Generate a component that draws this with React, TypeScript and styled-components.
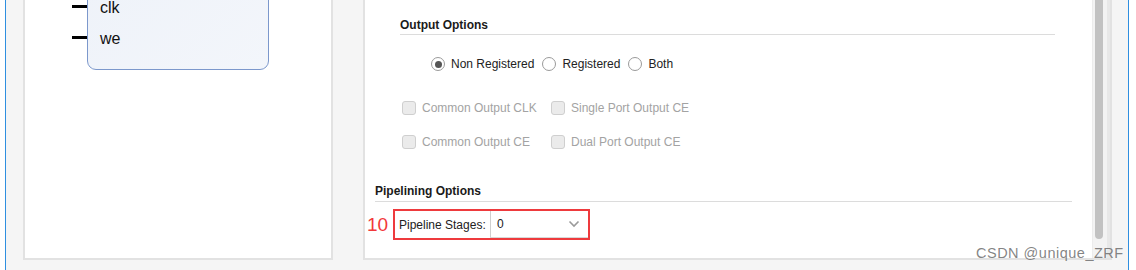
import React from "react";
import styled, { createGlobalStyle } from "styled-components";

const Global = createGlobalStyle`
  html, body { margin: 0; padding: 0; background: #ffffff; }
  body { font-family: "Liberation Sans", Arial, sans-serif; }
`;

const Frame = styled.div`
  position: relative;
  width: 1136px;
  height: 270px;
  overflow: hidden;
  background: #ffffff;
`;

const Window = styled.div`
  position: absolute;
  left: 5px;
  top: 0;
  width: 1124px;
  height: 270px;
  box-sizing: border-box;
  border-left: 1px solid #2f8fe0;
  border-right: 1px solid #2f8fe0;
  background: #f5f5f5;
  display: flex;
  align-items: flex-start;
  padding-left: 17px;
`;

const Panel = styled.div<{ $w: number }>`
  position: relative;
  width: ${(p) => p.$w}px;
  height: 260px;
  box-sizing: border-box;
  background: #ffffff;
  border: 2px solid #e2e2e2;
  border-top: none;
  overflow: hidden;
  flex: none;
`;

const Gap = styled.div`
  width: 30px;
  flex: none;
`;

const Block = styled.div`
  position: absolute;
  left: 62px;
  top: -50px;
  width: 182px;
  height: 120px;
  box-sizing: border-box;
  border: 1px solid #7c98cc;
  border-radius: 0 0 9px 9px;
  background: linear-gradient(135deg, #eef2f9, #f3f6fb);
`;

const Port = styled.div<{ $y: number }>`
  position: absolute;
  left: 47px;
  top: ${(p) => p.$y}px;
  display: flex;
  align-items: center;
  height: 20px;
`;

const PortLine = styled.div`
  width: 15px;
  height: 3px;
  background: #000;
`;

const PortLabel = styled.span`
  margin-left: 13px;
  margin-top: 3px;
  font-size: 16px;
  color: #111;
  font-family: "Liberation Sans", Arial, sans-serif;
`;

const RightBody = styled.div`
  display: flex;
  height: 100%;
`;

const Content = styled.div`
  flex: 1;
  padding: 0 20px 0 10px;
  display: flex;
  flex-direction: column;
`;

const OutputSection = styled.div`
  margin-left: 25px;
  margin-right: 17px;
  padding-top: 18px;
`;

const Heading = styled.div`
  font-size: 12px;
  font-weight: bold;
  color: #1a1a1a;
  line-height: 14px;
  padding-bottom: 2px;
  border-bottom: 1px solid #dcdcdc;
`;

const PipeHeading = styled(Heading)`
  padding-bottom: 3px;
`;

const RadioRow = styled.div`
  display: flex;
  align-items: center;
  margin-left: 31px;
  margin-top: 21px;
  height: 16px;
`;

const RadioItem = styled.label`
  display: flex;
  align-items: center;
  font-size: 12px;
  color: #222;
  margin-right: 8px;
`;

const RadioCircle = styled.span<{ $on?: boolean }>`
  width: 14px;
  height: 14px;
  box-sizing: border-box;
  border: 1px solid #9a9a9a;
  border-radius: 50%;
  margin-right: 6px;
  display: flex;
  align-items: center;
  justify-content: center;
  background: #fff;
  &::after {
    content: "";
    display: ${(p) => (p.$on ? "block" : "none")};
    width: 7px;
    height: 7px;
    border-radius: 50%;
    background: #555;
  }
`;

const CheckGrid = styled.div`
  display: grid;
  grid-template-columns: 149px auto;
  row-gap: 20px;
  margin-top: 29px;
  margin-left: 2px;
`;

const CheckItem = styled.label`
  display: flex;
  align-items: center;
  font-size: 12px;
  color: #a3a3a3;
  height: 14px;
`;

const CheckBox = styled.span`
  width: 14px;
  height: 14px;
  box-sizing: border-box;
  border: 1px solid #cfcfcf;
  border-radius: 3px;
  background: #ebebeb;
  margin-right: 6px;
`;

const PipeSection = styled.div`
  margin-top: 35px;
`;

const StageRow = styled.div`
  display: flex;
  align-items: center;
  margin-top: 7px;
  margin-left: -9px;
`;

const Marker = styled.span`
  font-size: 19px;
  color: #f2383a;
  width: 27px;
  padding-left: 1px;
  box-sizing: border-box;
  font-family: "Liberation Sans", Arial, sans-serif;
`;

const RedBox = styled.div`
  display: flex;
  align-items: center;
  border: 2px solid #ee3a3d;
  height: 31px;
  box-sizing: border-box;
  width: 197px;
`;

const StageLabel = styled.span`
  font-size: 12px;
  color: #222;
  padding-left: 4px;
  width: 95px;
  box-sizing: border-box;
`;

const Select = styled.div`
  flex: 1;
  align-self: stretch;
  display: flex;
  align-items: center;
  justify-content: space-between;
  border-left: 1px solid #cfcfcf;
  border-bottom: 1px solid #d8d8d8;
  padding: 0 8px 0 6px;
  font-size: 12px;
  color: #222;
`;

const Scrollbar = styled.div`
  width: 18px;
  flex: none;
  height: 100%;
  box-sizing: border-box;
  border-left: 1px solid #ececec;
  border-right: 3px solid #e8e8e8;
  background: #f3f3f3;
  display: flex;
  justify-content: center;
`;

const Thumb = styled.div`
  width: 8px;
  height: 239px;
  margin-left: -3px;
  background: #c2c2c2;
  border-radius: 0 0 4px 4px;
`;

const Watermark = styled.div`
  position: absolute;
  left: 976px;
  top: 245px;
  font-size: 14.5px;
  color: rgba(110, 110, 110, 0.85);
  font-family: "Liberation Sans", Arial, sans-serif;
  letter-spacing: 0.5px;
`;

export default function App() {
  return (
    <Frame>
      <Global />
      <Window>
        <Panel $w={310}>
          <Block />
          <Port $y={-4}>
            <PortLine />
            <PortLabel>clk</PortLabel>
          </Port>
          <Port $y={27}>
            <PortLine />
            <PortLabel>we</PortLabel>
          </Port>
        </Panel>
        <Gap />
        <Panel $w={749}>
          <RightBody>
            <Content>
              <OutputSection>
                <Heading>Output Options</Heading>
                <RadioRow>
                  <RadioItem>
                    <RadioCircle $on />
                    Non Registered
                  </RadioItem>
                  <RadioItem>
                    <RadioCircle />
                    Registered
                  </RadioItem>
                  <RadioItem>
                    <RadioCircle />
                    Both
                  </RadioItem>
                </RadioRow>
                <CheckGrid>
                  <CheckItem>
                    <CheckBox />
                    Common Output CLK
                  </CheckItem>
                  <CheckItem>
                    <CheckBox />
                    Single Port Output CE
                  </CheckItem>
                  <CheckItem>
                    <CheckBox />
                    Common Output CE
                  </CheckItem>
                  <CheckItem>
                    <CheckBox />
                    Dual Port Output CE
                  </CheckItem>
                </CheckGrid>
              </OutputSection>
              <PipeSection>
                <PipeHeading>Pipelining Options</PipeHeading>
                <StageRow>
                  <Marker>10</Marker>
                  <RedBox>
                    <StageLabel>Pipeline Stages:</StageLabel>
                    <Select>
                      <span>0</span>
                      <svg width="12" height="8" viewBox="0 0 12 8">
                        <path d="M1.5 1.5 L6 6 L10.5 1.5" fill="none" stroke="#9a9a9a" strokeWidth="1.6" />
                      </svg>
                    </Select>
                  </RedBox>
                </StageRow>
              </PipeSection>
            </Content>
            <Scrollbar>
              <Thumb />
            </Scrollbar>
          </RightBody>
        </Panel>
      </Window>
      <Watermark>CSDN @unique_ZRF</Watermark>
    </Frame>
  );
}
